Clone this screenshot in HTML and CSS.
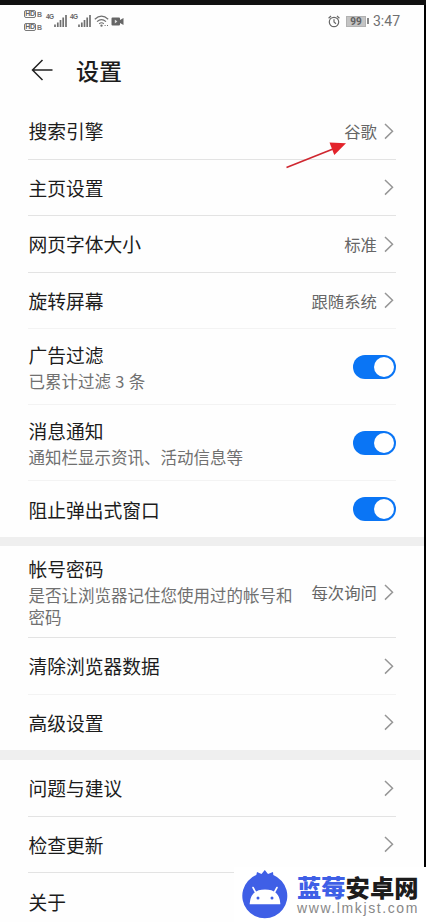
FILE: index.html
```html
<!DOCTYPE html>
<html lang="zh-CN">
<head>
<meta charset="utf-8">
<title>设置</title>
<link rel="stylesheet" href="styles.css">
</head>
<body>
<svg class="defs" width="0" height="0">
  <symbol id="chevron" viewBox="0 0 10 17"><path d="M1 1l7.500 7.300L1 15.600" fill="none" stroke="#969696" stroke-width="1.500"/></symbol>
  <symbol id="signal" viewBox="0 0 13 12"><path d="M1 9.500V12M3.800 7.500V12M6.500 5V12M9.200 2.500V12M12 0V12" fill="none" stroke="#707070" stroke-width="1.700"/></symbol>
</svg>
<div class="screen">
  <div class="status">
    <div class="left">
      <div class="sims">
        <div class="sim"><span class="hd">HD</span><span class="slot">B</span></div>
        <div class="sim"><span class="hd">HD</span><span class="slot">B</span></div>
      </div>
      <span class="net">4G</span><svg class="signal"><use href="#signal"/></svg>
      <span class="net second">4G</span><svg class="signal"><use href="#signal"/></svg>
      <svg class="wifi" viewBox="0 0 15 12" fill="none" stroke="#707070" stroke-width="1.200"><path d="M.8 4.200Q7.500-2 14.200 4.200M3 6.600Q7.500 2.600 12 6.600M5.200 8.700Q7.500 6.800 9.800 8.700"/><circle cx="7.500" cy="10.600" r=".6"/><path d="M10.600 10.500h1M13 10.500h1"/></svg>
      <svg class="camera" viewBox="0 0 13 9"><path d="M1.500.5h6.500q1 0 1 1v1.500l3.500-2v7L9 6v1.500q0 1-1 1H1.500q-1 0-1-1v-6q0-1 1-1z" fill="#666"/><path d="M3.800 2.500l2.600 2-2.600 2z" fill="#ddd"/></svg>
    </div>
    <div class="right">
      <svg class="alarm" viewBox="0 0 12 13" fill="none" stroke="#686868" stroke-width="1.200"><circle cx="6" cy="7" r="4.700"/><path d="M6 4.200V7l2 1.700M.6 3.200L3 1M11.400 3.200L9 1"/></svg>
      <span class="battery">99</span><span class="tip"></span>
      <span class="time">3:47</span>
    </div>
  </div>
  <header class="header">
    <svg class="back" viewBox="0 0 22 22" fill="none" stroke="#222" stroke-width="1.500"><path d="M21.500 11H1.500M11.500 1L1.500 11l10 10"/></svg>
    <h1>设置</h1>
  </header>
  <section class="group">
    <div class="row"><div class="title">搜索引擎</div><div class="value">谷歌</div><svg class="chev"><use href="#chevron"/></svg></div>
    <div class="row"><div class="title">主页设置</div><svg class="chev"><use href="#chevron"/></svg></div>
    <div class="row"><div class="title">网页字体大小</div><div class="value">标准</div><svg class="chev"><use href="#chevron"/></svg></div>
    <div class="row faint"><div class="title">旋转屏幕</div><div class="value">跟随系统</div><svg class="chev"><use href="#chevron"/></svg></div>
    <div class="row double faint"><div class="title">广告过滤<p class="count">已累计过滤 3 条</p></div><span class="switch"></span></div>
    <div class="row double faint"><div class="title">消息通知<p>通知栏显示资讯、活动信息等</p></div><span class="switch"></span></div>
    <div class="row"><div class="title">阻止弹出式窗口</div><span class="switch"></span></div>
  </section>
  <section class="group">
    <div class="row triple"><div class="title">帐号密码<p>是否让浏览器记住您使用过的帐号和密码</p></div><div class="value">每次询问</div><svg class="chev"><use href="#chevron"/></svg></div>
    <div class="row faint"><div class="title">清除浏览器数据</div><svg class="chev"><use href="#chevron"/></svg></div>
    <div class="row short"><div class="title">高级设置</div><svg class="chev"><use href="#chevron"/></svg></div>
  </section>
  <section class="group support">
    <div class="row"><div class="title">问题与建议</div><svg class="chev"><use href="#chevron"/></svg></div>
    <div class="row"><div class="title">检查更新</div><svg class="chev"><use href="#chevron"/></svg></div>
    <div class="row"><div class="title">关于</div></div>
  </section>
  <svg class="pointer" viewBox="0 0 62 28"><path d="M1.500 25.500L48 7" stroke="#cf2730" stroke-width="1.700"/><path d="M61 1.200L44.500.5l4.800 12.500z" fill="#e3232b"/></svg>
  <div class="watermark">
    <svg class="logo" viewBox="0 0 46 49"><path d="M14.300 5L15 2l4.500 2L22.800 0 26 4l5-2 .3 3A22.500 22.500 0 1 1 14.300 5z" fill="#3f5fe6"/><path d="M8.500 33.500C9 24.500 14.500 20.300 23 20.300S37 24.500 37.500 33.500zM14 23l-3-5.500M32 23l3-5.500" fill="#fff" stroke="#fff" stroke-width="1.600" stroke-linecap="round"/><circle cx="16" cy="28" r="1.500" fill="#3f5fe6"/><circle cx="30" cy="28" r="1.500" fill="#3f5fe6"/></svg>
    <div class="brand"><div class="name"><span>蓝莓</span>安卓网</div><div class="url">www.lmkjst.com</div></div>
  </div>
</div>
</body>
</html>
```
FILE: styles.css
```css
* { box-sizing: border-box; }
body { margin: 0; background: #fff; font-family: "Noto Sans CJK SC", sans-serif; color: #1c1c1c; }
.defs { position: absolute; }
svg { display: block; flex: none; }
.screen { position: relative; width: 426px; height: 922px; overflow: hidden; border-top: 5px solid #111; padding-right: 2px; background: #fefefe linear-gradient(#000, #000) right top / 2px 862px no-repeat; }

.status { height: 31px; display: flex; justify-content: space-between; padding: 0 24px; }
.left, .right { display: flex; align-items: center; }
.left { align-items: flex-start; }
.right { padding-top: 1px; }
.sims { display: flex; flex-direction: column; gap: 5px; padding-top: 5px; width: 22px; }
.sim { display: flex; align-items: center; gap: 1px; height: 8px; }
.hd { width: 12px; height: 8px; border: 1px solid #777; border-radius: 2px; font: bold 7px/6px "Liberation Sans", sans-serif; color: #666; text-align: center; letter-spacing: -.3px; }
.slot { font: bold 7px/8px "Liberation Sans", sans-serif; color: #777; padding-top: 2px; }
.net { font: bold 6.500px/8px "Liberation Sans", sans-serif; color: #666; margin-top: 8px; width: 8px; letter-spacing: -.5px; }
.net.second { margin-left: 3px; }
.signal { width: 13px; height: 12px; margin-top: 10px; }
.wifi { width: 15px; height: 12px; margin: 10px 0 0 3px; }
.camera { width: 13px; height: 9px; margin: 12px 0 0 2px; }
.alarm { width: 12px; height: 13px; margin-right: 6px; }
.battery { width: 20px; height: 11px; background: #c4c4c4; border: 1px solid #b2b2b2; font: bold 10px/10px Roboto, sans-serif; color: #606060; text-align: center; }
.tip { width: 2px; height: 6px; background: #888; margin: 0 4px 0 1px; }
.time { font: 14px/16px Roboto, sans-serif; color: #707070; }

.header { height: 67px; display: flex; align-items: center; padding: 2px 0 2px 31px; }
.back { width: 22px; height: 22px; }
.header h1 { margin: -1px 0 0 23px; font-size: 23px; line-height: 34px; font-weight: 500; padding-top: 1px; }

.group + .group { border-top: 9px solid #efefef; }
.group.support { border-top-width: 10px; }
.row { height: 56.500px; margin: 0 28px; display: flex; align-items: center; border-bottom: 1px solid #e3e3e3; }
.row.faint { border-color: #f3f3f3; }
.row:last-child { height: 56px; border-bottom: 0; }
.row.short { height: 55.500px; }
.row.double { height: 76px; }
.row.triple { height: 92px; }
.title { flex: 1; font-size: 18.750px; line-height: 27px; margin-top: .4px; padding-left: .4px; }
.title p { margin: 0; font-size: 16.500px; line-height: 22px; padding-top: 2px; color: #707070; }
.title .count { word-spacing: .7px; }
.double .title { margin-top: 0; }
.triple .title { margin-top: -1px; }
.triple .title p { width: 268px; }
.value { font-size: 16.400px; line-height: 24px; color: #666; margin-right: 7px; padding-top: 1px; white-space: nowrap; }
.chev { width: 10px; height: 17px; margin: 1px 2px 0 0; }
.switch { width: 43px; height: 24px; border-radius: 12px; background: #0a75f5; padding: 2px; display: flex; justify-content: flex-end; }
.switch::after { content: ""; width: 20px; height: 20px; border-radius: 50%; background: #fff; }

.pointer { position: absolute; left: 285px; top: 137px; width: 62px; height: 28px; }
.watermark { position: absolute; left: 234px; top: 862px; width: 192px; height: 55px; background: #fff; display: flex; padding: 3px 0 0 8px; }
.logo { width: 46px; height: 49px; }
.brand { padding-left: 9px; }
.name { font-size: 24.300px; line-height: 28px; font-weight: 900; white-space: nowrap; padding-top: 3px; }
.name span { color: #3f5fe6; }
.url { font: 14px/14px "Liberation Sans", sans-serif; letter-spacing: 1.600px; color: #888; white-space: nowrap; }
```
